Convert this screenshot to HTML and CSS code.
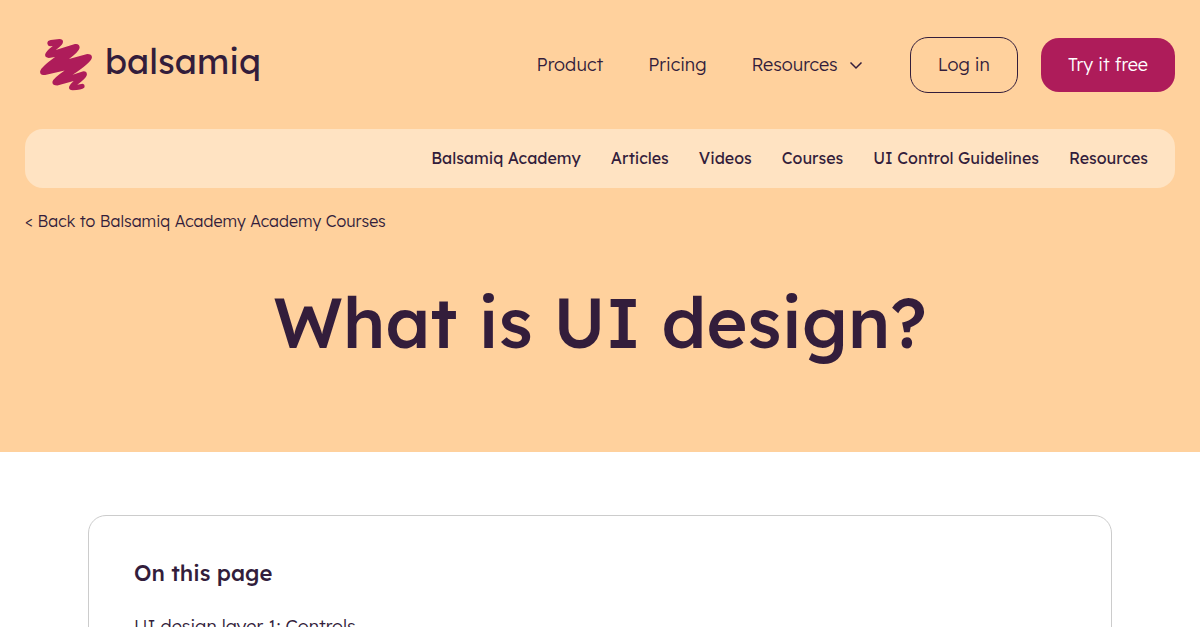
FILE: index.html
```html
<!DOCTYPE html>
<html lang="en">
<head>
<meta charset="utf-8">
<meta name="viewport" content="width=device-width, initial-scale=1">
<title>What is UI design?</title>
<link rel="stylesheet" href="styles.css">
</head>
<body>
<div class="hero">
  <header class="header">
    <a class="logo" href="#">
      <svg class="logo-mark" viewBox="30 41 159 160" aria-hidden="true"><path d="M52 56Q50 46 62 44L88 41Q102 41 98 54Q94 62 77 74L135 56Q150 54 149 68Q147 79 117 101L172 86Q188 86 186 98Q183 112 128 149L158 139Q172 137 171 150Q168 161 142 179L158 176Q167 178 163 188Q155 194 128 196Q114 194 118 184Q122 176 131 168L82 181Q66 181 67 170Q69 160 104 136L45 150Q28 150 30 138Q32 126 75 95L56 98Q44 97 45 88Q47 78 68 62L60 63Q54 63 52 56Z"/></svg>
      <span class="logo-text">balsamiq</span>
    </a>
    <nav class="main-nav" aria-label="Main">
      <a href="#">Product</a>
      <a href="#">Pricing</a>
      <button class="nav-menu" type="button" aria-expanded="false">Resources
        <svg class="chevron" viewBox="0 0 14 14" aria-hidden="true"><path d="M1.500 4.500 7 10l5.500-5.500"/></svg>
      </button>
    </nav>
    <div class="actions">
      <a class="btn btn-outline" href="#">Log in</a>
      <a class="btn btn-primary" href="#">Try it free</a>
    </div>
  </header>
  <nav class="sub-nav" aria-label="Learn">
    <a href="#">Balsamiq Academy</a>
    <a href="#">Articles</a>
    <a href="#">Videos</a>
    <a href="#">Courses</a>
    <a href="#">UI Control Guidelines</a>
    <a href="#">Resources</a>
  </nav>
  <a class="back" href="#">&lt; Back to Balsamiq Academy Academy Courses</a>
  <h1 class="title">What is UI design?</h1>
</div>
<main class="content">
  <section class="toc">
    <h2 class="toc-title">On this page</h2>
    <a class="toc-link" href="#">UI design layer 1: Controls</a>
  </section>
</main>
</body>
</html>
```
FILE: styles.css
```css
* { box-sizing: border-box; }
body {
  margin: 0;
  background: #fff;
  color: #331d3b;
  font-family: Lexend, Inter, "Liberation Sans", sans-serif;
  font-weight: 300;
}
a { color: inherit; text-decoration: none; }
.hero {
  background: #ffd19d;
  padding: 37px 25px 83px;
}
.header {
  display: flex;
  align-items: center;
  padding-left: 15px;
}
.logo {
  display: flex;
  align-items: center;
  gap: 12px;
  margin-right: auto;
}
.logo-mark { width: 53px; height: 53px; fill: #ae1c5a; }
.logo-text {
  padding-bottom: 8px;
  font-size: 35px;
  line-height: 44px;
  font-weight: 400;
}
.main-nav {
  display: flex;
  align-items: center;
  gap: 45px;
  font-size: 18px;
  line-height: 24px;
}
.nav-menu {
  display: flex;
  align-items: center;
  gap: 11px;
  padding: 0;
  border: 0;
  background: none;
  color: inherit;
  font: inherit;
}
.chevron {
  width: 14px;
  height: 14px;
  fill: none;
  stroke: currentColor;
  stroke-width: 1.5;
}
.actions {
  display: flex;
  align-items: center;
  gap: 23px;
  margin-left: 47px;
}
.btn {
  padding: 15px 27px;
  border-radius: 18px;
  font-size: 18px;
  line-height: 24px;
  white-space: nowrap;
}
.btn-outline { border: 1px solid #331d3b; }
.btn-primary { background: #ae1c5a; color: #fff; }
.sub-nav {
  display: flex;
  justify-content: flex-end;
  gap: 30px;
  margin-top: 36px;
  padding: 17px 27px 18px;
  border-radius: 18px;
  background: #ffe3c2;
  font-size: 16px;
  line-height: 24px;
  font-weight: 400;
}
.back {
  display: block;
  margin-top: 21px;
  font-size: 16px;
  line-height: 24px;
}
.title {
  margin: 42px 0 0;
  font-size: 70px;
  line-height: 94px;
  font-weight: 500;
  text-align: center;
}
.content { padding: 63px 88px 0; }
.toc {
  border: 1px solid #ccc;
  border-radius: 18px;
  padding: 41px 45px 48px;
}
.toc-title {
  margin: 0 0 24px;
  font-size: 22px;
  line-height: 32px;
  font-weight: 500;
}
.toc-link { font-size: 18px; line-height: 28px; }
```
